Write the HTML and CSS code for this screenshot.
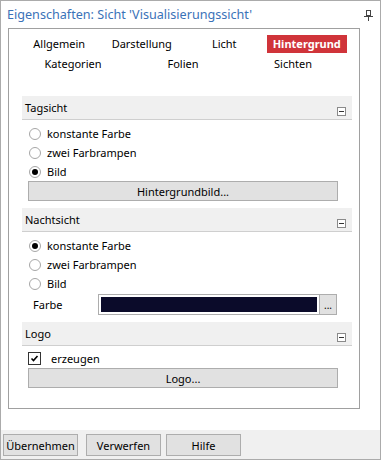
FILE: index.html
```html
<!DOCTYPE html>
<html>
  <head>
    <link rel="stylesheet" href="styles.css">
  </head>
  <body>
    <div class="window">
      <div class="titlebar">
        <span class="title">Eigenschaften: Sicht 'Visualisierungssicht'</span>
        <svg class="pin" width="9" height="11" viewBox="0 0 9 11">
          <rect x="2.5" y="0.5" width="4" height="5" fill="none" stroke="#444"/>
          <line x1="0" y1="6.5" x2="9" y2="6.5" stroke="#444"/>
          <line x1="4.5" y1="6" x2="4.5" y2="11" stroke="#444"/>
        </svg>
      </div>

      <div class="panel">
        <div class="tabs">
          <div class="tabrow four">
            <span class="tab">Allgemein</span>
            <span class="tab">Darstellung</span>
            <span class="tab">Licht</span>
            <span class="tab active">Hintergrund</span>
          </div>
          <div class="tabrow three">
            <span class="tab">Kategorien</span>
            <span class="tab">Folien</span>
            <span class="tab">Sichten</span>
          </div>
        </div>

        <div class="section">
          <div class="sect-head">
            <span>Tagsicht</span>
            <span class="collapse"></span>
          </div>
          <div class="sect-body">
            <div class="radio"><span class="circle"></span>konstante Farbe</div>
            <div class="radio"><span class="circle"></span>zwei Farbrampen</div>
            <div class="radio"><span class="circle on"></span>Bild</div>
            <div class="btn wide">Hintergrundbild...</div>
          </div>
        </div>

        <div class="section">
          <div class="sect-head">
            <span>Nachtsicht</span>
            <span class="collapse"></span>
          </div>
          <div class="sect-body">
            <div class="radio"><span class="circle on"></span>konstante Farbe</div>
            <div class="radio"><span class="circle"></span>zwei Farbrampen</div>
            <div class="radio"><span class="circle"></span>Bild</div>
            <div class="colorrow">
              <span class="lbl">Farbe</span>
              <span class="colorfield"><span class="swatch"></span></span>
              <span class="dots">...</span>
            </div>
          </div>
        </div>

        <div class="section">
          <div class="sect-head">
            <span>Logo</span>
            <span class="collapse"></span>
          </div>
          <div class="sect-body">
            <div class="check">
              <svg class="box" width="13" height="13" viewBox="0 0 13 13">
                <rect x="0.5" y="0.5" width="12" height="12" fill="#fff" stroke="#333"/>
                <path d="M3.5 6.5 L5.5 8.5 L9.5 4" fill="none" stroke="#000" stroke-width="1.6"/>
              </svg>
              erzeugen
            </div>
            <div class="btn wide">Logo...</div>
          </div>
        </div>
      </div>

      <div class="spacer"></div>

      <div class="footer">
        <span class="btn small">Übernehmen</span>
        <span class="btn small">Verwerfen</span>
        <span class="btn small">Hilfe</span>
      </div>
    </div>
  </body>
</html>
```

FILE: styles.css
```css
/* Eigenschaften-Fenster */
body {
  margin: 0;
  font-family: "Segoe UI", "Noto Sans", sans-serif;
  font-size: 11px;
  color: #000;
  background: #fff;
}

.window {
  width: 381px;
  height: 460px;
  box-sizing: border-box;
  border: 1px solid #ababab;
  display: flex;
  flex-direction: column;
}

.titlebar {
  height: 27px;
  display: flex;
  align-items: center;
  justify-content: space-between;
  padding: 0 7px 0 6px;
}

.title {
  color: #3a72b8;
  font-size: 12.6px;
}

.pin {
  margin-top: 1px;
}

.panel {
  margin-left: 7px;
  width: 352px;
  height: 381px;
  box-sizing: border-box;
  border: 1px solid #a0a0a0;
  padding: 6px 7px 0 9px;
}

/* Reiter */
.tabs {
  width: 330px;
  margin-bottom: 23px;
}

.tabrow {
  display: grid;
  height: 18px;
  align-items: center;
  justify-items: center;
}

.tabrow.four {
  grid-template-columns: repeat(4, 1fr);
}

.tabrow.three {
  grid-template-columns: repeat(3, 1fr);
  margin-top: 2px;
}

.tab {
  line-height: 18px;
}

.tab.active {
  background: #d0343a;
  color: #fff;
  font-weight: bold;
  padding: 0 6px;
}

/* Abschnitte */
.section {
  margin-left: 4px;
  margin-bottom: 7px;
}

.sect-head {
  height: 23px;
  background: #f0f0f0;
  border-bottom: 1px solid #cfcfcf;
  display: flex;
  justify-content: space-between;
  align-items: center;
  padding: 0 6px 0 3px;
}

.collapse {
  align-self: flex-end;
  margin-bottom: 3px;
  width: 7px;
  height: 7px;
  border: 1px solid #8a8a8a;
  background: #fff;
  position: relative;
}

.collapse::after {
  content: "";
  position: absolute;
  left: 1px;
  right: 1px;
  top: 3px;
  height: 1px;
  background: #333;
}

.sect-body {
  padding: 4px 14px 0 6px;
}

.radio, .check {
  height: 19px;
  display: flex;
  align-items: center;
}

.circle {
  width: 10px;
  height: 10px;
  border: 1px solid #a6a6a6;
  border-radius: 50%;
  background: #fff;
  margin: 0 6px 0 1px;
  position: relative;
}

.circle.on::after {
  content: "";
  position: absolute;
  left: 2px;
  top: 2px;
  width: 6px;
  height: 6px;
  border-radius: 50%;
  background: #000;
}

.check {
  margin-top: -1px;
}

.box {
  margin-right: 10px;
}

.btn {
  background: #e1e1e1;
  border: 1px solid #adadad;
  box-sizing: border-box;
  display: flex;
  align-items: center;
  justify-content: center;
}

.btn.wide {
  height: 20px;
}

.colorrow {
  display: flex;
  align-items: center;
  height: 21px;
  margin-top: 1px;
}

.lbl {
  width: 65px;
  padding-left: 5px;
}

.colorfield {
  width: 222px;
  height: 21px;
  box-sizing: border-box;
  border: 1px solid #adadad;
  padding: 2px;
  background: #fff;
}

.swatch {
  display: block;
  height: 100%;
  background: #0b0b2a;
}

.dots {
  width: 17px;
  height: 21px;
  box-sizing: border-box;
  border: 1px solid #adadad;
  border-left: none;
  background: #e1e1e1;
  display: flex;
  align-items: center;
  justify-content: center;
  font-size: 10px;
}

.spacer {
  flex: 1;
}

.footer {
  height: 29px;
  background: #f0f0f0;
  display: flex;
  padding: 4px 0 0 2px;
  box-sizing: border-box;
}

.btn.small {
  width: 75px;
  height: 22px;
  margin-right: 8px;
}

.btn.small:nth-child(2) {
  margin-right: 5px;
}
```
